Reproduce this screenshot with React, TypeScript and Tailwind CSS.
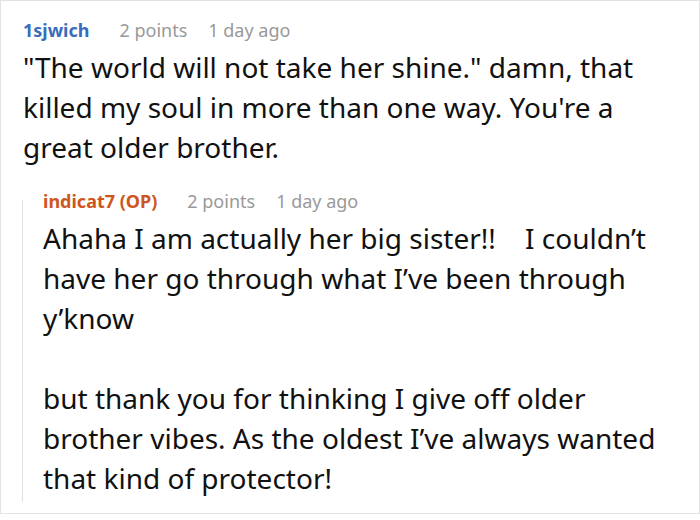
const font = { fontFamily: '"Noto Sans", "Open Sans", sans-serif' }

interface MetaProps {
  author: string
  points: string
  time: string
  op?: boolean
}

function CommentMeta({ author, points, time, op }: MetaProps) {
  return (
    <div className="flex items-baseline text-[18px] leading-[24px]">
      <span className={op ? 'font-bold text-[#cf5520]' : 'font-bold text-[#3a6cbc]'}>{author}</span>
      <span className="ml-[30px] text-[#999999]">{points}</span>
      <span className="ml-[21px] text-[#999999]">{time}</span>
    </div>
  )
}

export default function App() {
  return (
    <div className="w-[700px] h-[520px] bg-white" style={font}>
      <div className="h-[514px] border border-[#e3e3e3] pl-[22px] pt-[17px]">
        <CommentMeta author="1sjwich" points="2 points" time="1 day ago" />
        <p className="mt-[5px] text-[28px] leading-[40px] text-[#111111] whitespace-pre-line">
          {'"The world will not take her shine." damn, that\nkilled my soul in more than one way. You\'re a\ngreat older brother.'}
        </p>

        {/* reply */}
        <div className="mt-[22px] flex">
          <div className="-ml-px mt-[11px] h-[302px] w-px shrink-0 bg-[#e0e0e0]" />
          <div className="pl-[20px]">
            <CommentMeta author="indicat7 (OP)" points="2 points" time="1 day ago" op />
            <p className="mt-[5px] text-[28px] leading-[40px] text-[#111111] whitespace-pre-wrap">
              {'Ahaha I am actually her big sister!!    I couldn’t\nhave her go through what I’ve been through\ny’know\n\nbut thank you for thinking I give off older\nbrother vibes. As the oldest I’ve always wanted\nthat kind of protector!'}
            </p>
          </div>
        </div>
      </div>
    </div>
  )
}
